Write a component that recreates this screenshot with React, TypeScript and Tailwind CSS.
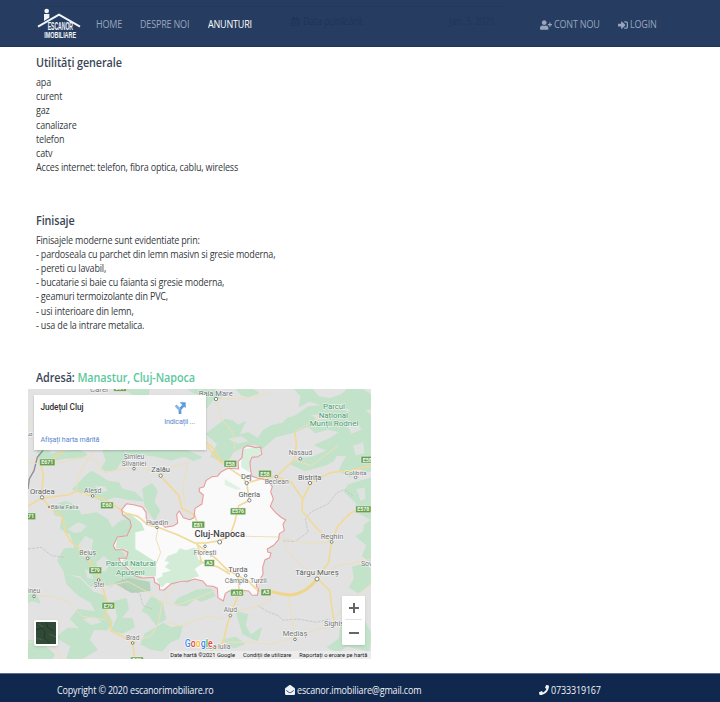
import type { ReactNode } from "react";
import { FaEnvelopeOpen, FaPhone, FaRegCalendarAlt, FaSignInAlt, FaUserPlus } from "react-icons/fa";

const LAND = [
  "M30 184L60 182L72 204L36 222Z",
  "M60 200L92 190L150 184L175 196L160 206L120 205L85 212L55 215Z",
  "M225 184L288 183L292 205L272 226L262 242L235 248L222 236L236 215Z",
  "M292 184L470 182L520 205L496 214L470 200L430 212L380 200L345 196L310 200Z",
  "M165 270L190 248L215 262L240 278L272 282L280 300L322 312L345 335L300 330L262 322L222 335L190 318L135 300L150 285Z",
  "M345 300L372 285L386 305L377 338L394 365L380 392L352 350Z",
  "M78 350L112 338L148 352L158 380L205 372L238 392L252 420L283 394L305 398L300 430L270 450L258 475L282 490L300 512L340 505L384 530L380 560L338 568L290 566L250 590L218 582L190 592L158 560L112 552L90 515L110 480L142 478L128 435L98 418L104 382L80 376Z",
  "M284 376L305 374L340 402L350 424L322 430L322 480L385 520L384 562L330 563L282 515L300 505L296 482L262 478L268 446L300 438L308 404Z",
  "M420 500L445 492L456 478L474 484L496 476L520 482L506 498L512 512L530 520L514 530L500 540L514 562L496 566L480 578L458 574L435 584L416 582L400 596L385 570L404 562L402 552L430 545L410 534L424 520L410 516Z",
  "M110 555L155 570L195 610L232 622L226 655L252 700L236 722L198 720L182 752L206 782L158 810L118 808L130 770L86 745L120 718L160 722L128 690L150 662L205 670L190 640L152 618L118 585Z",
  "M260 638L294 630L300 660L278 688L312 690L318 714L282 732L252 722L270 684Z",
  "M370 625L402 640L412 690L384 706L362 676L344 665Z",
  "M352 735L406 704L430 718L462 710L452 748L426 758L402 785L370 780L340 765Z",
  "M450 630L508 604L548 600L560 620L520 636L500 628L475 650L440 646Z",
  "M0 754L36 760L78 796L72 810L0 810Z",
  "M0 606L20 610L35 640L12 634L0 640Z",
  "M290 0L362 0L360 18L322 18Z",
  "M482 0L560 0L580 25L554 32L536 55L532 18L500 12Z",
  "M536 135L592 92L612 96L630 110L650 100L640 120L632 138L660 132L690 150L706 126L728 112L764 104L780 88L802 82L842 54L900 48L960 70L1000 58L1029 80L1029 245L1008 248L990 235L978 256L965 262L935 245L944 222L960 200L925 198L914 216L890 228L830 244L790 225L815 210L850 206L900 185L862 168L905 150L938 128L900 120L862 130L840 110L800 128L742 142L702 178L680 164L650 170L615 188L604 208L590 220L550 202L570 165Z",
  "M800 0L850 0L872 24L906 30L940 18L960 0L1000 0L1029 18L1029 58L980 68L935 45L880 46L842 35L814 52L820 20Z",
  "M625 0L670 0L690 12L662 22L642 18Z",
  "M962 288L1029 268L1029 390L990 370L985 340L950 308Z",
  "M1010 408L1029 396L1029 520L1004 500L1018 468L986 442L1008 428Z",
  "M975 535L1012 525L1029 545L1029 585L990 610L965 595L980 570Z",
  "M940 708L1010 700L1029 735L1022 784L955 770L930 790L900 775L934 750Z",
  "M625 668L658 678L650 708L668 740L700 718L688 754L646 735Z",
  "M584 754L622 746L648 764L618 776Z",
];

// Valleys and clearings inside the forested areas
const CLEARINGS = [
  "M120 420L150 400L176 410L160 428L138 432Z",
  "M150 470L172 440L196 452L190 486L172 506L158 498Z",
  "M205 520L228 500L246 520L232 548L210 545Z",
  "M170 540L190 550L196 570L178 566Z",
  "M200 290L230 292L240 306L214 310Z",
  "M600 150L640 142L660 156L630 164Z",
  "M850 78L880 74L900 90L868 94Z",
  "M958 106L990 100L1000 122L970 134Z",
  "M975 170L1005 160L1010 192L984 200Z",
  "M165 690L200 684L222 700L190 708Z",
  "M986 300L1010 296L1012 330L998 336Z",
];

const COUNTY =
  "M632 240L630 218L642 206L645 178L658 170L684 176L698 174L701 196L690 203L672 205L666 218L668 246L672 262L690 268L704 270L720 276L733 293L728 308L736 330L727 352L742 370L758 384L773 393L765 405L769 425L754 434L752 451L738 468L718 480L719 489L729 492L725 506L711 512L704 535L705 556L697 570L686 579L685 592L692 600L688 619L672 618L662 606L640 604L628 612L605 605L592 613L586 636L570 626L568 598L555 592L536 590L524 576L500 570L478 577L460 577L430 584L408 603L395 602L394 588L380 580L378 565L345 567L325 562L300 540L278 520L272 508L296 508L300 490L286 482L262 482L256 470L268 444L297 440L310 412L306 394L284 377L281 362L296 344L320 348L343 354L354 370L355 390L372 404L396 402L412 415L438 410L449 402L446 376L454 366L466 386L486 392L498 386L501 358L522 345L526 318L514 308L514 298L528 293L534 275L552 263L568 262L580 248L600 238Z";

const ROADS = [
  "M0 352L42 327L120 318L145 306L190 320L228 330L260 350L292 372L330 382L360 408L390 415L450 438L500 462L534 462L575 455L606 440L620 400L632 350L664 334L656 282L640 262L600 235L560 205L538 170",
  "M536 160L562 185L575 215L605 228",
  "M398 262L425 290L452 320L462 358L500 378L510 408",
  "M42 327L72 362L104 385L112 430L128 458L162 484L180 510L205 545L212 572L226 602L240 650L232 680L250 705L248 725L280 740L314 760L320 810",
  "M40 325L46 260L34 205",
  "M45 230L110 184",
  "M505 465L540 490L565 510L600 545L630 558L634 610L610 670L594 720L586 760L545 790",
  "M510 470L520 520L570 534L606 556",
  "M656 282L704 268L745 264L790 280L824 330L822 365L868 420L910 460L902 520L868 568",
  "M745 264L800 210L805 165L800 128",
  "M824 330L850 280L910 250L970 245L1029 230",
  "M910 460L930 410L970 370L1029 354",
  "M868 568L905 605L912 660L920 704",
  "M630 560L660 575L690 606L715 606",
];

const THIN_ROADS = [
  "M0 222L80 225L160 205L205 215L225 250L290 240L330 230L398 262L430 235L480 220L465 285L470 350",
  "M145 306L150 260L175 220L200 184",
  "M0 100L18 100",
  "M18 620L70 622L120 640L162 682L232 692",
  "M390 415L384 450L398 490L385 522",
  "M240 590L300 578L370 615L400 640L450 648L525 620L565 602",
  "M314 760L370 740L392 700L402 640L435 600",
  "M420 700L460 712L540 680L585 690",
  "M610 668L680 655L720 640L735 620",
  "M606 440L660 442L750 444L830 462L906 460",
  "M564 30L580 90L615 130L620 180",
  "M780 618L790 670L800 745L870 720L940 710",
  "M800 745L730 765L650 760L590 760",
  "M868 568L800 510L765 460",
  "M868 568L930 530L985 520L1029 510",
  "M800 128L860 95L920 70",
  "M564 30L650 30L720 10",
  "M0 760L70 755L100 810",
  "M800 214L850 230L930 170",
  "M905 706L960 640L1010 600L1029 585",
];

const BORDERS = [
  "M45 184L28 205L18 245L4 270L0 300",
  "M690 650L720 668L750 680L765 694L810 690L865 700L905 690",
  "M765 455L800 458L840 430L832 390L850 368L900 345L928 310L950 302L975 320",
  "M282 566L290 600L335 612L345 650L372 660",
  "M0 480L40 475L70 500L110 505",
];

// Text, centre x, baseline y, font size, drawn width, colour, weight
type Label = [string, number, number, number, number, string, number];
const G = "#74787c";
const D = "#575b5f";
const P = "#4d9a73";
const LABELS: Label[] = [
  ["Carei", 213, 8, 20, 54, G, 400],
  ["Baia Mare", 563, 20, 22, 102, G, 400],
  ["Parcul", 918, 61, 22, 66, P, 400],
  ["Național", 916, 86, 22, 88, P, 400],
  ["Munții Rodnei", 918, 111, 22, 146, P, 400],
  ["Nasaud", 817, 199, 20, 70, G, 400],
  ["Șimleu", 318, 209, 19, 62, G, 400],
  ["Silvaniei", 318, 230, 19, 74, G, 400],
  ["Zalău", 398, 248, 22, 56, D, 400],
  ["Oradea", 43, 316, 23, 74, D, 400],
  ["Aleșd", 194, 311, 19, 52, G, 400],
  ["Băile Felix", 110, 360, 18, 84, G, 400],
  ["Dej", 655, 271, 22, 32, D, 400],
  ["Beclean", 746, 286, 20, 72, G, 400],
  ["Bistrița", 845, 272, 22, 70, D, 400],
  ["Colibița", 983, 257, 18, 66, G, 400],
  ["Gherla", 664, 323, 22, 65, D, 400],
  ["Huedin", 387, 407, 20, 66, G, 400],
  ["Cluj-Napoca", 575, 445, 27, 151, "#3c4043", 500],
  ["Florești", 531, 497, 20, 68, G, 400],
  ["Reghin", 912, 449, 22, 68, G, 400],
  ["Beiuș", 179, 499, 20, 50, G, 400],
  ["Parcul Natural", 308, 532, 22, 150, P, 400],
  ["Apuseni", 307, 557, 22, 86, P, 400],
  ["Ștei", 213, 593, 19, 32, G, 400],
  ["Turda", 630, 548, 22, 58, D, 400],
  ["Câmpia Turzii", 653, 583, 20, 126, G, 400],
  ["Târgu Mureș", 867, 559, 23, 130, D, 400],
  ["Sov", 1016, 530, 19, 34, G, 400],
  ["ineu", 18, 611, 19, 36, G, 400],
  ["Aiud", 607, 670, 20, 40, G, 400],
  ["Brad", 314, 752, 20, 40, G, 400],
  ["Mediaș", 801, 741, 22, 74, G, 400],
  ["Sighiș", 918, 712, 22, 60, G, 400],
  ["Alba Iulia", 566, 780, 20, 82, G, 400],
  ["uz", 5, 140, 17, 18, G, 400],
];

// Badge text, centre x, centre y
const SHIELDS: [string, number, number][] = [
  ["E81", 276, -3], ["E671", 58, 220], ["E58", 607, 224], ["E58", 711, 254], ["E58", 1018, 212],
  ["E60", 237, 349], ["E576", 630, 367], ["E578", 1006, 361], ["E81", 511, 407], ["A3", 544, 522],
  ["E79", 202, 544], ["E79", 241, 650], ["A10", 627, 611], ["A3", 714, 610], ["671", 4, 382], ["E79", 327, 814],
];

const TOWNS: [number, number, number][] = [
  [564, 30, 5], [817, 209, 4], [318, 239, 4], [398, 260, 5], [42, 325, 5], [194, 321, 4],
  [63, 354, 2], [656, 282, 5], [745, 263, 4], [846, 282, 5], [983, 265, 4], [664, 334, 5],
  [387, 415, 4], [575, 459, 6], [531, 472, 4], [911, 459, 4], [179, 508, 4], [212, 573, 4],
  [629, 558, 5], [653, 560, 4], [867, 570, 6], [18, 622, 4], [607, 680, 4], [314, 762, 4], [801, 751, 4],
];

const UTILITIES = [
  "apa", "curent", "gaz", "canalizare", "telefon", "catv",
  "Acces internet: telefon, fibra optica, cablu, wireless",
];

const FINISHES = [
  "Finisajele moderne sunt evidentiate prin:",
  "- pardoseala cu parchet din lemn masivn si gresie moderna,",
  "- pereti cu lavabil,",
  "- bucatarie si baie cu faianta si gresie moderna,",
  "- geamuri termoizolante din PVC,",
  "- usi interioare din lemn,",
  "- usa de la intrare metalica.",
];

// Slightly condensed run of body text
function Narrow({ children }: { children: ReactNode }) {
  return <span className="inline-block origin-left scale-x-90 whitespace-nowrap">{children}</span>;
}

function Logo() {
  return (
    <svg viewBox="0 0 132 93" className="h-[31px] w-[44px] shrink-0 overflow-visible" fill="#f1f4f8">
      <circle cx="29" cy="9" r="7" />
      <path d="M21 18H37V29L21 39Z" />
      <path d="M3 56L66 20L129 56" fill="none" stroke="#f1f4f8" strokeWidth="6" />
      <g fontFamily="'Liberation Sans Narrow', 'Liberation Sans', Arial, sans-serif" fontWeight="700">
        <text x="32" y="67" fontSize="30" textLength="76" lengthAdjust="spacingAndGlyphs">ESCANOR</text>
        <text x="22" y="91" fontSize="29" textLength="95" lengthAdjust="spacingAndGlyphs">IMOBILIARE</text>
      </g>
    </svg>
  );
}

function Header() {
  return (
    <header className="relative flex h-[47px] items-center border-b border-[#203354] bg-[#263d61] text-[10px] tracking-[-0.2px] text-[#98a5bd]">
      <div className="absolute left-[36px] top-[6px] h-px w-[471px] bg-[#243a5d]" />
      <div className="absolute left-[291px] top-[14px] flex items-center gap-[3px] text-[#1f3455]">
        <FaRegCalendarAlt className="size-[9px]" />
        <Narrow>Data publicării:</Narrow>
      </div>
      <span className="absolute left-[449px] top-[14px] text-[#213658]"><Narrow>Jan. 3, 2021</Narrow></span>
      <div className="relative ml-[37px] flex"><Logo /></div>
      <nav className="relative ml-[15px] flex pt-[3px]">
        <a className="w-[44px]"><Narrow>HOME</Narrow></a>
        <a className="w-[68px]"><Narrow>DESPRE NOI</Narrow></a>
        <a className="w-[50px] text-white"><Narrow>ANUNTURI</Narrow></a>
      </nav>
      <div className="relative ml-auto mr-[63px] flex pt-[3px]">
        <a className="flex w-[78px] items-center gap-[2px]"><FaUserPlus className="size-[12px] shrink-0" /><Narrow>CONT NOU</Narrow></a>
        <a className="flex w-[39px] items-center gap-[2px]"><FaSignInAlt className="size-[10px] shrink-0" /><Narrow>LOGIN</Narrow></a>
      </div>
    </header>
  );
}

function MapDrawing() {
  return (
    <svg viewBox="0 0 1029 810" className="block h-[270px] w-[343px]" fontFamily="Roboto, sans-serif">
      <defs>
        <clipPath id="county"><path d={COUNTY} /></clipPath>
      </defs>
      <rect width="1029" height="810" fill="#e2e2e2" />
      <g fill="#c3e2ca" stroke="#c3e2ca" strokeWidth="5" strokeLinejoin="round">
        {LAND.map((d) => <path key={d} d={d} />)}
      </g>
      <g fill="#dfe3df">{CLEARINGS.map((d) => <path key={d} d={d} />)}</g>
      <g clipPath="url(#county)">
        <path d={COUNTY} fill="#fafafa" />
        <path d={LAND[7]} fill="#cbe9d1" />
        <path d={LAND[8]} fill="#d3ecd8" />
        <path d="M640 180L700 175L695 203L668 208L664 250L640 235Z" fill="#d9efdd" />
        <path d="M590 270L610 282L640 300L625 302L590 288Z" fill="#e1f2e4" />
      </g>
      <path d="M258 582L300 566L365 578L368 606L310 612Z" fill="#b4d3b8" />
      <g fill="none" stroke="#b9bcbf" strokeWidth="2" strokeDasharray="9 3">
        {BORDERS.map((d) => <path key={d} d={d} />)}
      </g>
      <path d={BORDERS[0]} fill="none" stroke="#8d9196" strokeWidth="4" />
      <g fill="none" stroke="#eedfb9" strokeWidth="3" strokeLinejoin="round">
        {THIN_ROADS.map((d) => <path key={d} d={d} />)}
      </g>
      <g fill="none" stroke="#f0d999" strokeWidth="5" strokeLinejoin="round">
        {ROADS.map((d) => <path key={d} d={d} />)}
      </g>
      <path d="M715 604Q760 616 790 618Q835 612 867 570" fill="none" stroke="#f0d588" strokeWidth="9" />
      <path d={COUNTY} fill="none" stroke="#e89a9c" strokeWidth="3.2" strokeLinejoin="round" />
      {SHIELDS.map(([t, x, y], i) => {
        const w = t.length * 8 + 14;
        return (
          <g key={i}>
            <rect x={x - w / 2} y={y - 10} width={w} height="20" rx="2" fill="#659f4d" stroke="#e9f2e4" strokeWidth="1.5" />
            <text x={x} y={y + 6} fontSize="16" fontWeight="700" fill="#f2f8ee" textAnchor="middle" textLength={w - 10} lengthAdjust="spacingAndGlyphs">{t}</text>
          </g>
        );
      })}
      {TOWNS.map(([x, y, r]) => <circle key={`${x}-${y}`} cx={x} cy={y} r={r} fill="#fff" stroke="#6b6f73" strokeWidth="2.5" />)}
      {LABELS.map(([t, x, y, s, w, c, b]) => (
        <text key={t} x={x} y={y} fontSize={s} fontWeight={b} fill={c} stroke="#fff" strokeWidth="4" strokeOpacity="0.6" paintOrder="stroke" textAnchor="middle" textLength={w} lengthAdjust="spacingAndGlyphs">{t}</text>
      ))}
      <text x="470" y="774" fontSize="30" fontWeight="500" textLength="84" lengthAdjust="spacingAndGlyphs" stroke="#fff" strokeWidth="4" paintOrder="stroke">
        <tspan fill="#4285f4">G</tspan><tspan fill="#ea4335">o</tspan><tspan fill="#fbbc05">o</tspan><tspan fill="#4285f4">g</tspan><tspan fill="#34a853">l</tspan><tspan fill="#ea4335">e</tspan>
      </text>
      <rect x="424" y="786" width="605" height="24" fill="#f1f1f1" fillOpacity="0.7" />
      <g fontSize="17" fill="#17191b">
        <text x="427" y="804" textLength="194" lengthAdjust="spacingAndGlyphs">Date hartă ©2021 Google</text>
        <text x="645" y="804" textLength="145" lengthAdjust="spacingAndGlyphs">Condiții de utilizare</text>
        <text x="814" y="804" textLength="204" lengthAdjust="spacingAndGlyphs">Raportați o eroare pe hartă</text>
      </g>
    </svg>
  );
}

function MapCard() {
  return (
    <div className="absolute left-[6px] top-[6px] flex h-[55px] w-[172px] justify-between bg-white pl-[6.5px] pr-[7px] font-['Roboto',sans-serif] shadow-[0_1px_2px_rgba(0,0,0,0.2)]">
      <div className="flex flex-col justify-between pb-[4px] pt-[6px] leading-[12px]">
        <span className="text-[8.3px] font-medium tracking-[-0.1px] text-[#333]">Județul Cluj</span>
        <span className="text-[7.1px] tracking-[-0.1px] text-[#5a86cd]">Afișați harta mărită</span>
      </div>
      <div className="flex flex-col items-center pr-[4px] pt-[7px] text-[7.2px] leading-[12px] text-[#5a86cd]">
        <svg viewBox="0 0 36 36" className="mb-[2px] size-[12px]" fill="none" stroke="#5a9bdc" strokeWidth="8">
          <path d="M18 36V22L28 11" />
          <path d="M18 24L5 10" stroke="#86b7e6" />
          <path d="M17 1H35V19Z" fill="#5a9bdc" stroke="none" />
        </svg>
        <span className="tracking-[-0.15px]">Indicații ...</span>
      </div>
    </div>
  );
}

function LocationMap() {
  return (
    <div className="relative ml-[28px] h-[270px] w-[343px] overflow-hidden">
      <MapDrawing />
      <MapCard />
      <div className="absolute bottom-[13px] left-[6px] h-[26px] w-[24px] rounded-[2px] border-2 border-white bg-[#304a37] shadow">
        <svg viewBox="0 0 20 22" className="size-full" fill="none" strokeWidth="1">
          <path d="M0 8L6 6L9 10L8 15L13 21M10 0L12 6L18 9" stroke="#223a2b" />
          <path d="M0 16L6 18M13 12L20 15M3 2L7 5" stroke="#47614b" />
        </svg>
      </div>
      <div className="absolute bottom-[14px] right-[6px] flex h-[49px] w-[23px] flex-col items-center rounded-[1px] bg-white shadow">
        <div className="flex h-[24px] w-[17px] items-center justify-center border-b border-[#e3e3e3]">
          <svg viewBox="0 0 10 10" className="size-[10px]" stroke="#666" strokeWidth="2"><path d="M0 5H10M5 0V10" /></svg>
        </div>
        <div className="flex h-[25px] items-center">
          <svg viewBox="0 0 10 10" className="size-[10px]" stroke="#666" strokeWidth="2"><path d="M0 5H10" /></svg>
        </div>
      </div>
    </div>
  );
}

function Section({ title, lines }: { title: string; lines: string[] }) {
  return (
    <section className="h-[157.5px] pl-[36px] pt-px">
      <h2 className="mb-[4px] text-[12px] font-semibold leading-[16px] tracking-[-0.1px] text-[#3a4556]"><Narrow>{title}</Narrow></h2>
      {lines.map((line) => (
        <p key={line} className="text-[10px] leading-[14.2px] tracking-[-0.2px] text-[#34393e]"><Narrow>{line}</Narrow></p>
      ))}
    </section>
  );
}

export default function App() {
  return (
    <div className="flex h-[702px] w-[720px] flex-col overflow-hidden bg-white font-['Open_Sans','Noto_Sans',sans-serif]">
      <Header />
      <main className="h-[626px] pt-[7px]">
        <Section title="Utilități generale" lines={UTILITIES} />
        <Section title="Finisaje" lines={FINISHES} />
        <h2 className="h-[20px] pl-[36px] text-[12px] font-semibold leading-[17px] tracking-[-0.08px] text-[#3a4556]">
          <Narrow>Adresă: <span className="text-[#5cc79e]">Manastur, Cluj-Napoca</span></Narrow>
        </h2>
        <LocationMap />
      </main>
      <footer className="grid h-[29px] grid-cols-[228px_254px_1fr] items-center border-t border-[#5c6c89] bg-[#10284e] pl-[57px] pt-[4px] text-[10px] tracking-[-0.18px] text-[#eef1f6]">
        <Narrow>Copyright © 2020 escanorimobiliare.ro</Narrow>
        <span className="flex items-center gap-[2px]"><FaEnvelopeOpen className="size-[10px]" /><Narrow>escanor.imobiliare@gmail.com</Narrow></span>
        <span className="flex items-center gap-[2px]"><FaPhone className="size-[10px]" /><Narrow>0733319167</Narrow></span>
      </footer>
    </div>
  );
}
